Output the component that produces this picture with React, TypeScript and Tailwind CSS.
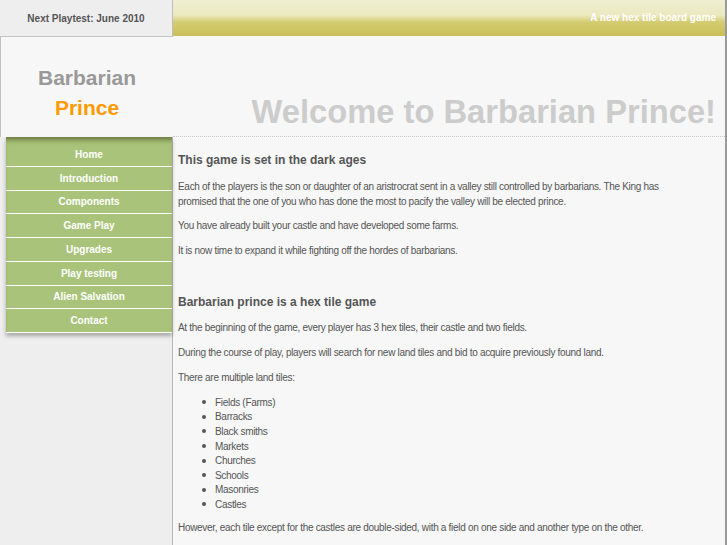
import React from "react";

// --- dados ---
const menuItems = [
  "Home",
  "Introduction",
  "Components",
  "Game Play",
  "Upgrades",
  "Play testing",
  "Alien Salvation",
  "Contact",
];

const landTiles = [
  "Fields (Farms)",
  "Barracks",
  "Black smiths",
  "Markets",
  "Churches",
  "Schools",
  "Masonries",
  "Castles",
];

const Para: React.FC<{ className?: string; children: React.ReactNode }> = ({
  className = "",
  children,
}) => (
  <p className={`text-[10px] leading-[14.5px] tracking-[-0.3px] ${className}`}>
    {children}
  </p>
);

const App: React.FC = () => {
  return (
    <div className="w-[727px] h-[545px] overflow-hidden bg-[#f7f7f7] border-r-2 border-[#9a9a9a] font-['Liberation_Sans',Arial,sans-serif] text-[#555]">
      {/* top bar */}
      <div className="flex h-[36px]">
        <div className="w-[173px] bg-[#eeeeee] border-r border-[#bdbdbd] flex items-center justify-center text-[10px] font-bold text-[#555]">
          Next Playtest: June 2010
        </div>
        <div className="flex-1 flex items-center justify-end pr-[9px] pb-[2px] text-[10px] font-bold text-white bg-[linear-gradient(to_bottom,#efeed2_0%,#ebe9bf_42%,#d3cb70_62%,#c9c059_100%)]">
          A new hex tile board game
        </div>
      </div>

      {/* header */}
      <div className="flex h-[101px]">
        <div className="relative z-10 w-[173px] bg-[#f7f7f7] border-l border-t border-[#c4c4c4] flex flex-col items-center pt-[26px] text-[21px] font-bold leading-[30px]">
          <span className="text-[#999999]">Barbarian</span>
          <span className="text-[#ff9900]">Prince</span>
        </div>
        <div className="flex-1 flex items-end justify-end pr-[9px] pb-[7px] border-b border-dotted border-[#c8c8c8] text-[32.7px] leading-none font-bold text-[#cccccc]">
          Welcome to Barbarian Prince!
        </div>
      </div>

      {/* body */}
      <div className="flex h-[408px]">
        <div className="w-[173px] bg-[#eeeeee] border-r border-[#b8b8b8] pl-[6px]">
          <ul className="bg-[#a9c47a] pt-[6px] shadow-[inset_0_6px_5px_-3px_rgba(60,60,20,0.55),0_3px_4px_rgba(0,0,0,0.3)]">
            {menuItems.map((item) => (
              <li
                key={item}
                className="h-[23.75px] border-b border-white flex items-center justify-center text-[10px] font-bold text-white"
              >
                {item}
              </li>
            ))}
          </ul>
        </div>

        <div className="flex-1 pl-[5px] pr-[36px] pt-[16px]">
          <h2 className="text-[12px] leading-[14px] font-bold">
            This game is set in the dark ages
          </h2>
          <Para className="mt-[13px]">
            Each of the players is the son or daughter of an aristrocrat sent
            in a valley still controlled by barbarians. The King has promised
            that the one of you who has done the most to pacify the valley
            will be elected prince.
          </Para>
          <Para className="mt-[10px]">
            You have already built your castle and have developed some farms.
          </Para>
          <Para className="mt-[10px]">
            It is now time to expand it while fighting off the hordes of
            barbarians.
          </Para>

          <h2 className="mt-[37px] text-[12px] leading-[14px] font-bold">
            Barbarian prince is a hex tile game
          </h2>
          <Para className="mt-[12px]">
            At the beginning of the game, every player has 3 hex tiles, their
            castle and two fields.
          </Para>
          <Para className="mt-[10.5px]">
            During the course of play, players will search for new land tiles
            and bid to acquire previously found land.
          </Para>
          <Para className="mt-[10.5px]">There are multiple land tiles:</Para>

          <ul className="mt-[9.5px]">
            {landTiles.map((tile) => (
              <li
                key={tile}
                className="flex items-center h-[14.6px] text-[10px] tracking-[-0.3px]"
              >
                <span className="ml-[24px] mr-[9px] w-[4px] h-[4px] rounded-full bg-[#555]" />
                {tile}
              </li>
            ))}
          </ul>

          <Para className="mt-[9.5px]">
            However, each tile except for the castles are double-sided, with a
            field on one side and another type on the other.
          </Para>
        </div>
      </div>
    </div>
  );
};

export default App;
